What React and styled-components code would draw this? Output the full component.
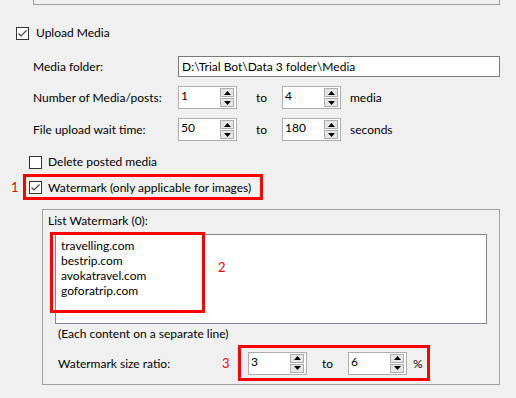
import React from 'react';
import styled, { createGlobalStyle } from 'styled-components';

const Global = createGlobalStyle`
  html, body { margin: 0; padding: 0; background: #f0f0f0; }
  body {
    font-family: "Segoe UI", Lato, "Noto Sans", sans-serif;
    font-size: 12px;
    color: #000;
    width: 516px;
    height: 398px;
    overflow: hidden;
  }
`;

const Page = styled.div`
  display: flex;
  flex-direction: column;
  width: 516px;
  height: 398px;
  position: relative;
`;

const TopEdge = styled.div`
  box-sizing: border-box;
  margin-left: 33px;
  width: 467px;
  height: 5px;
  border: 1px solid #a0a0a0;
  border-top: none;
`;

const CheckRow = styled.div`
  display: flex;
  align-items: center;
  gap: ${p => p.$gap || 6}px;
  margin-left: ${p => p.$indent}px;
  margin-top: ${p => p.$top}px;
  height: 14px;
  line-height: 14px;
`;

const Box = styled.span`
  box-sizing: border-box;
  width: 13px;
  height: 13px;
  border: 1px solid #333;
  background: #fff;
  display: inline-flex;
  align-items: center;
  justify-content: center;
  flex: none;
`;

const Check = ({ checked }) => (
  <Box>
    {checked && (
      <svg width="11" height="11" viewBox="0 0 11 11">
        <polyline points="1.5,5.5 4,8 9.5,2.5" fill="none" stroke="#444" strokeWidth="1.2" />
      </svg>
    )}
  </Box>
);

const FieldRow = styled.div`
  display: flex;
  align-items: center;
  margin-left: ${p => p.$indent || 33}px;
  margin-top: ${p => p.$top}px;
  height: ${p => p.$h || 22}px;
`;

const Label = styled.span`
  width: ${p => p.$w}px;
  flex: none;
  white-space: nowrap;
`;

const TextInput = styled.div`
  box-sizing: border-box;
  width: 322px;
  height: 21px;
  border: 1px solid #7a7a7a;
  background: #fff;
  padding-left: 3px;
  display: flex;
  align-items: center;
  white-space: nowrap;
`;

const SpinWrap = styled.div`
  box-sizing: border-box;
  width: 59px;
  height: 23px;
  border: 1px solid #abadb3;
  background: #fff;
  display: flex;
  align-items: stretch;
  flex: none;
`;

const SpinValue = styled.span`
  flex: 1;
  padding-left: 2px;
  line-height: 17px;
`;

const SpinButtons = styled.div`
  display: flex;
  flex-direction: column;
  gap: 1px;
  width: 14px;
  padding: 1px 2px 1px 0;
`;

const SpinBtn = styled.div`
  box-sizing: border-box;
  flex: 1;
  background: #e6e6e6;
  border: 1px solid #adadad;
  display: flex;
  align-items: center;
  justify-content: center;
`;

const Arrow = ({ up }) => (
  <svg width="7" height="4" viewBox="0 0 7 4">
    <polygon points={up ? '3.5,0 7,4 0,4' : '0,0 7,0 3.5,4'} fill="#000" />
  </svg>
);

const Spin = ({ value }) => (
  <SpinWrap>
    <SpinValue>{value}</SpinValue>
    <SpinButtons>
      <SpinBtn><Arrow up /></SpinBtn>
      <SpinBtn><Arrow /></SpinBtn>
    </SpinButtons>
  </SpinWrap>
);

const Between = styled.span`
  box-sizing: border-box;
  width: ${p => p.$w}px;
  padding-left: ${p => p.$pad}px;
  flex: none;
`;

const Unit = styled.span`
  margin-left: ${p => p.$m}px;
`;

const Marked = styled.div`
  box-sizing: border-box;
  border: 3px solid #ff0000;
  display: flex;
  align-items: center;
`;

const WatermarkMark = styled(Marked)`
  width: 240px;
  height: 26px;
  padding-left: 3px;
  gap: 6px;
`;

const Num = styled.span`
  color: #ff0000;
  font-size: 13px;
  width: ${p => p.$w}px;
  flex: none;
`;

const Group = styled.div`
  box-sizing: border-box;
  margin-left: 42px;
  margin-top: 9px;
  width: 458px;
  height: 176px;
  border: 1px solid #a0a0a0;
  display: flex;
  flex-direction: column;
`;

const Caption = styled.div`
  margin: 3px 0 0 5px;
  line-height: 16px;
`;

const ListBox = styled.div`
  box-sizing: border-box;
  position: relative;
  margin: 5px 0 0 12px;
  width: 432px;
  height: 90px;
  border: 1px solid #828790;
  background: #fff;
  padding: 3px 0 0 5px;
  line-height: 15px;
`;

const ListMark = styled.div`
  position: absolute;
  left: -6px;
  top: -3px;
  width: 155px;
  height: 81px;
  box-sizing: border-box;
  border: 3px solid #ff0000;
`;

const ListNum = styled.span`
  position: absolute;
  left: 162px;
  top: 25px;
  color: #ff0000;
  font-size: 13px;
`;

const Hint = styled.div`
  margin: 2px 0 0 15px;
  line-height: 16px;
`;

const RatioRow = styled.div`
  display: flex;
  align-items: center;
  margin: 3px 0 0 15px;
  height: 36px;
`;

const RatioMark = styled(Marked)`
  width: 192px;
  height: 36px;
  padding: 0 0 0 7px;
`;

export default function App() {
  return (
    <Page>
      <Global />
      <TopEdge />
      <CheckRow $indent={16} $top={21} $gap={7}>
        <Check checked />
        <span>Upload Media</span>
      </CheckRow>
      <FieldRow $top={16} $h={21}>
        <Label $w={145}>Media folder:</Label>
        <TextInput>D:\Trial Bot\Data 3 folder\Media</TextInput>
      </FieldRow>
      <FieldRow $top={9} $h={23}>
        <Label $w={145}>Number of Media/posts:</Label>
        <Spin value="1" />
        <Between $w={45} $pad={19}>to</Between>
        <Spin value="4" />
        <Unit $m={9}>media</Unit>
      </FieldRow>
      <FieldRow $top={9} $h={23}>
        <Label $w={145}>File upload wait time:</Label>
        <Spin value="50" />
        <Between $w={45} $pad={19}>to</Between>
        <Spin value="180" />
        <Unit $m={9}>seconds</Unit>
      </FieldRow>
      <CheckRow $indent={29} $top={14}>
        <Check />
        <span>Delete posted media</span>
      </CheckRow>
      <FieldRow $indent={11} $top={5} $h={26}>
        <Num $w={12}>1</Num>
        <WatermarkMark>
          <Check checked />
          <span>Watermark (only applicable for images)</span>
        </WatermarkMark>
      </FieldRow>
      <Group>
        <Caption>List Watermark (0):</Caption>
        <ListBox>
          <div>travelling.com</div>
          <div>bestrip.com</div>
          <div>avokatravel.com</div>
          <div>goforatrip.com</div>
          <ListMark />
          <ListNum>2</ListNum>
        </ListBox>
        <Hint>(Each content on a separate line)</Hint>
        <RatioRow>
          <Label $w={164}>Watermark size ratio:</Label>
          <Num $w={16}>3</Num>
          <RatioMark>
            <Spin value="3" />
            <Between $w={41} $pad={15}>to</Between>
            <Spin value="6" />
            <Unit $m={6}>%</Unit>
          </RatioMark>
        </RatioRow>
      </Group>
    </Page>
  );
}
